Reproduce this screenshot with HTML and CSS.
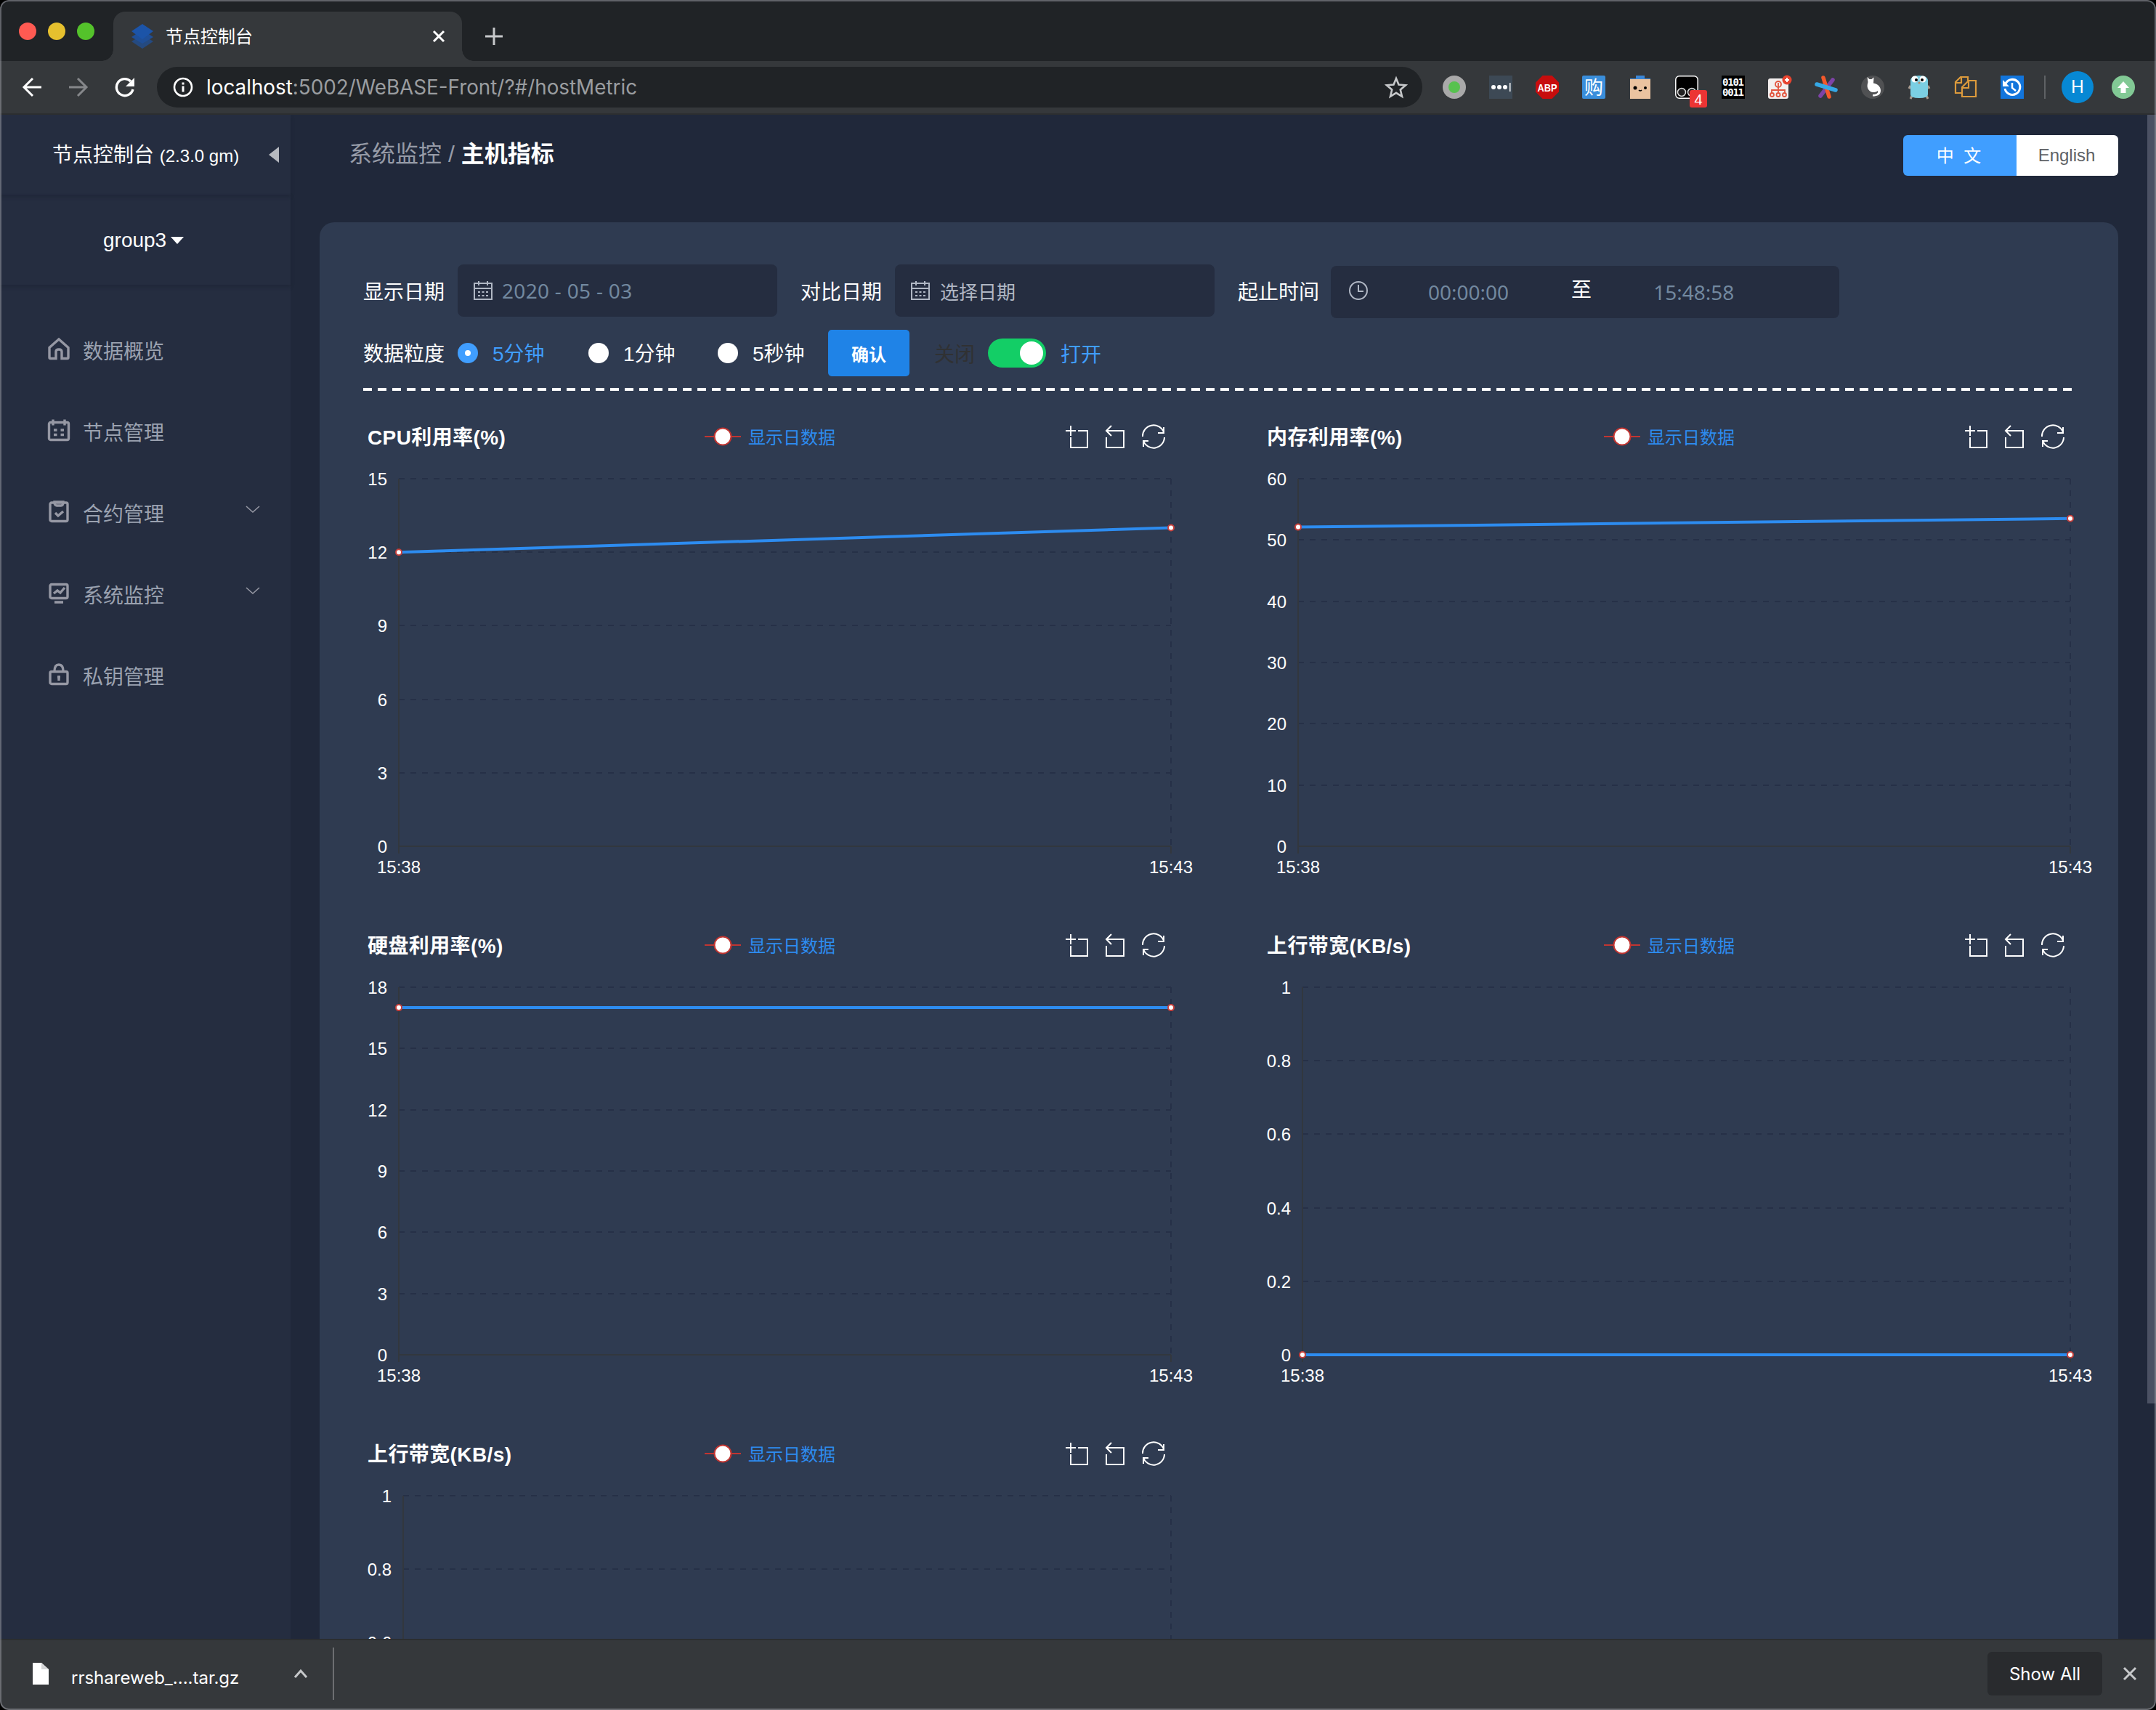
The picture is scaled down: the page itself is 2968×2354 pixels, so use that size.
FILE: index.html
```html
<!DOCTYPE html>
<html lang="zh-CN">
<head>
  <meta charset="UTF-8">
  <title>节点控制台</title>
  <link rel="stylesheet" href="styles.css">
</head>
<body>
  <div class="window">
    <div class="tab-strip">
      <div class="lights">
        <span class="light red"></span>
        <span class="light yellow"></span>
        <span class="light green"></span>
      </div>
      <div class="tab">
        <svg class="favicon" width="32" height="34" viewBox="0 0 32 34">
          <path d="M16 15l15 9-15 10L1 24z" fill="#254a80"/>
          <path d="M16 8l15 10-15 9L1 18z" fill="#1f4f98"/>
          <path d="M16 0l15 10-15 11L1 10z" fill="#1c54a8"/>
        </svg>
        <span class="tab-title">节点控制台</span>
        <svg width="18" height="18" viewBox="0 0 18 18"><path d="M2 2l14 14M16 2L2 16" stroke="#fff" stroke-width="3"/></svg>
      </div>
      <svg class="new-tab" width="24" height="24" viewBox="0 0 24 24"><path d="M12 0v24M0 12h24" stroke="#c6c8ca" stroke-width="3"/></svg>
    </div>

    <div class="toolbar">
      <div class="nav-buttons">
        <svg width="28" height="28" viewBox="0 0 28 28" fill="none" stroke="#fff" stroke-width="3"><path d="M27 14H3M15 2L3 14l12 12"/></svg>
        <svg width="28" height="28" viewBox="0 0 28 28" fill="none" stroke="#85878a" stroke-width="3"><path d="M1 14h24M13 2l12 12-12 12"/></svg>
        <svg width="28" height="28" viewBox="0 0 28 28" fill="none"><path d="M22 6a11.5 11.5 0 1 0 3 11" stroke="#fff" stroke-width="3.4"/><path d="M27 1v12H15z" fill="#fff"/></svg>
      </div>
      <div class="address">
        <svg width="28" height="28" viewBox="0 0 28 28"><circle cx="14" cy="14" r="12" fill="none" stroke="#fff" stroke-width="2.6"/><path d="M14 12.500v8M14 7.500v3" stroke="#fff" stroke-width="3"/></svg>
        <span class="url">localhost<span class="url-path">:5002/WeBASE-Front/?#/hostMetric</span></span>
        <svg width="32" height="32" viewBox="0 0 32 32"><path d="M16 4l3.500 8.500 9.500.8-7.200 6.200 2.200 9.300-8-5-8 5 2.200-9.300L3 13.300l9.500-.8z" fill="none" stroke="#c6c8ca" stroke-width="2.600"/></svg>
      </div>
      <div class="extensions">
        <svg width="32" height="32" viewBox="0 0 32 32"><circle cx="16" cy="16" r="16" fill="#a9a9a9"/><circle cx="16" cy="16" r="8" fill="#57c24f"/></svg>
        <svg width="32" height="32" viewBox="0 0 32 32"><rect width="32" height="32" fill="#3d4955"/><g fill="#fff"><circle cx="6" cy="16" r="3"/><circle cx="14" cy="16" r="3"/><circle cx="22" cy="16" r="3"/><path d="M28 10h1.500v12H28z"/></g></svg>
        <svg width="32" height="32" viewBox="0 0 32 32"><path d="M9.500 0h13L32 9.500v13L22.500 32h-13L0 22.500v-13z" fill="#c70d0d"/><text x="16" y="21.500" class="ext-abp" textLength="27" lengthAdjust="spacingAndGlyphs">ABP</text></svg>
        <svg width="32" height="32" viewBox="0 0 32 32"><rect width="32" height="32" rx="2" fill="#3a8edb"/><text x="16" y="26" class="ext-buy">购</text></svg>
        <svg width="32" height="32" viewBox="0 0 32 32"><rect x="2" y="5" width="28" height="27" fill="#eac3a0"/><path d="M2 5h28v-1H22V0H10v4H2z" fill="#3b86d6"/><circle cx="9" cy="17" r="2.500"/><circle cx="23" cy="17" r="2"/><path d="M14 20q2 2 4 0" fill="none" stroke="#000" stroke-width="1.500"/></svg>
        <svg width="32" height="32" viewBox="0 0 32 32"><rect x=".8" y=".8" width="30.400" height="30.400" rx="5" fill="#000" stroke="#fff" stroke-width="1.500"/><g fill="#222" stroke="#ddd" stroke-width="1.500"><circle cx="9" cy="23" r="5.500"/><circle cx="23" cy="23" r="5.500"/></g><rect x="20" y="20" width="24" height="24" rx="3" fill="#ec3434"/><text x="32" y="40" class="ext-badge">4</text></svg>
        <svg width="32" height="32" viewBox="0 0 32 32"><rect width="32" height="32" fill="#000"/><text x="16" y="14" class="ext-bits" textLength="30">0101</text><text x="16" y="28" class="ext-bits" textLength="30">0011</text></svg>
        <svg width="32" height="32" viewBox="0 0 32 32"><rect x="0" y="4" width="28" height="28" rx="3" fill="#f3efee"/><g fill="none" stroke="#e2553e" stroke-width="1.800"><circle cx="14" cy="12" r="4"/><path d="M14 10v13M5 24v-4h18v4"/><circle cx="5.500" cy="26.500" r="2.500"/><circle cx="14" cy="26.500" r="2.500"/><circle cx="22.500" cy="26.500" r="2.500"/></g><circle cx="26" cy="6" r="6.500" fill="#e8442f"/><path d="M26 3v6M23 6h6" stroke="#fff" stroke-width="2"/></svg>
        <svg width="32" height="32" viewBox="0 0 32 32" stroke-width="5.500" stroke-linecap="round"><path d="M25 6L8 28" stroke="#7d43a6"/><path d="M12 3l8 26" stroke="#f4592b"/><path d="M3 12l26 8" stroke="#35a8e6"/></svg>
        <svg width="32" height="32" viewBox="0 0 32 32"><circle cx="16" cy="16" r="16" fill="#505153"/><path d="M8.500 2l3 3h3l3-2.500-.5 8c6 1 10 5 10 10 0 6-4 8-11 8v-2.500c5 0 8-1.500 7-5-5 4-12 2-14-4-1-3 0-6 .5-8z" fill="#fff"/></svg>
        <svg width="32" height="32" viewBox="0 0 32 32"><path d="M4 14l-2 4M28 14l2 4M6 28l-2 4M26 28l2 4" stroke="#a99c90" stroke-width="3"/><path d="M4 6q1-6 12-6t12 6v20q0 5-12 5T4 26z" fill="#7bcfe3"/><circle cx="10" cy="5" r="4.500" fill="#fff"/><circle cx="21" cy="5" r="4.500" fill="#fff"/><circle cx="12" cy="6" r="2"/><circle cx="20" cy="6" r="2"/><circle cx="16" cy="10" r="1.500" fill="#b98a6a"/></svg>
        <svg width="32" height="32" viewBox="0 0 32 32" fill="none" stroke="#dc9a3c" stroke-width="2.200"><path d="M11 24H2V9l7-7h10v5M2 10h8V2"/><path d="M11 16l9-9h10v22H11zM11 17h9V7"/></svg>
        <svg width="32" height="32" viewBox="0 0 32 32"><rect width="32" height="32" fill="#1275dc"/><path d="M7 11a10.500 10.500 0 1 1-1 7" fill="none" stroke="#fff" stroke-width="3"/><path d="M3 6v9h9z" fill="#fff"/><path d="M16 10v7l5 4" fill="none" stroke="#fff" stroke-width="2.500"/></svg>
        <span class="ext-divider"></span>
        <span class="avatar">H</span>
        <svg class="update" width="32" height="32" viewBox="0 0 32 32"><circle cx="16" cy="16" r="16" fill="#82c995"/><path d="M16 8l8 9h-4.500v7h-7v-7H8z" fill="#fff"/></svg>
      </div>
    </div>

    <div class="page">
      <aside class="sidebar">
        <div class="brand">
          <span class="brand-name">节点控制台 <small>(2.3.0 gm)</small></span>
          <span class="collapse"></span>
        </div>
        <div class="group">group3<span class="caret"></span></div>
        <ul class="menu">
          <li>
            <svg width="32" height="32" viewBox="0 0 32 32"><path d="M3 14.500L16 3l13 11.500V28q0 1.500-1.500 1.500H20V20q0-3-4-3t-4 3v9.500H4.500Q3 29.500 3 28z"/></svg>
            <span>数据概览</span>
          </li>
          <li>
            <svg width="32" height="32" viewBox="0 0 32 32"><rect x="2.500" y="5.500" width="27" height="24" rx="2"/><path d="M8 1.500v8M24 1.500v8M9 16h4.500M18.500 16H23M9 22.500h4.500M18.500 22.500H23"/></svg>
            <span>节点管理</span>
          </li>
          <li>
            <svg width="32" height="32" viewBox="0 0 32 32"><rect x="4" y="4" width="24" height="25.500" rx="2"/><path d="M10 3q0 5 3 5h6q3 0 3-5zM11 18l4 4 7-6"/></svg>
            <span>合约管理</span>
            <svg class="arrow" width="20" height="12" viewBox="0 0 20 12"><path d="M1 1l9 8 9-8"/></svg>
          </li>
          <li>
            <svg width="32" height="32" viewBox="0 0 32 32"><rect x="4" y="4.500" width="24" height="19" rx="2"/><path d="M9 17l5-4 4 3 6-7M10 29h12"/></svg>
            <span>系统监控</span>
            <svg class="arrow" width="20" height="12" viewBox="0 0 20 12"><path d="M1 1l9 8 9-8"/></svg>
          </li>
          <li>
            <svg width="32" height="32" viewBox="0 0 32 32"><rect x="4" y="12.500" width="24" height="17" rx="2"/><path d="M10 12q0-9 6-9t6 9M16 18v7M14 20h4"/></svg>
            <span>私钥管理</span>
          </li>
        </ul>
      </aside>

      <main class="content">
        <div class="content-head">
          <div class="breadcrumb">系统监控 / <b>主机指标</b></div>
          <div class="lang">
            <button class="lang-btn active">中&nbsp; 文</button>
            <button class="lang-btn">English</button>
          </div>
        </div>

        <section class="panel">
          <div class="filters">
            <label>显示日期</label>
            <div class="field">
              <svg width="28" height="28" viewBox="0 0 28 28"><path d="M2 4h24v22H2zM2 11h24M8 1v6M20 1v6M7 16h3M12.500 16h3M18 16h3M7 21h3M12.500 21h3M18 21h3"/></svg>
              <span class="value date">2020 - 05 - 03</span>
            </div>
            <label>对比日期</label>
            <div class="field">
              <svg width="28" height="28" viewBox="0 0 28 28"><path d="M2 4h24v22H2zM2 11h24M8 1v6M20 1v6M7 16h3M12.500 16h3M18 16h3M7 21h3M12.500 21h3M18 21h3"/></svg>
              <span class="placeholder">选择日期</span>
            </div>
            <label>起止时间</label>
            <div class="field range">
              <svg width="28" height="28" viewBox="0 0 28 28"><circle cx="14" cy="14" r="12"/><path d="M14 6v9h7"/></svg>
              <span class="value from">00:00:00</span>
              <span class="to">至</span>
              <span class="value">15:48:58</span>
            </div>
          </div>
          <div class="options">
            <label>数据粒度</label>
            <span class="radio checked"></span><span class="radio-label on">5分钟</span>
            <span class="radio"></span><span class="radio-label">1分钟</span>
            <span class="radio"></span><span class="radio-label">5秒钟</span>
            <button class="confirm">确认</button>
            <span class="off-label">关闭</span>
            <span class="switch"></span>
            <span class="on-label">打开</span>
          </div>
          <div class="rule"></div>
          <div class="charts" id="charts"></div>
        </section>
      </main>
      <div class="scrollbar"></div>
    </div>

    <div class="downloads">
      <svg class="file" width="22" height="30" viewBox="0 0 22 30"><path d="M0 0h12l10 9v21H0z" fill="#fff"/><path d="M12 0v9h10z" fill="#d5d6d8"/></svg>
      <span class="file-name">rrshareweb_....tar.gz</span>
      <svg width="20" height="14" viewBox="0 0 20 14"><path d="M2 12l8-9 8 9" fill="none" stroke="#c6c8ca" stroke-width="3"/></svg>
      <span class="dl-divider"></span>
      <button class="show-all">Show All</button>
      <svg width="20" height="20" viewBox="0 0 20 20"><path d="M2 2l16 16M18 2L2 18" stroke="#c6c8ca" stroke-width="3"/></svg>
    </div>
  </div>
  <script src="charts.js"></script>
</body>
</html>
```
FILE: styles.css
```css
* {
  margin: 0;
  padding: 0;
  box-sizing: border-box;
}

body {
  background: #000;
  color: #fff;
  font-family: "Liberation Sans", "Noto Sans CJK SC", sans-serif;
  font-size: 28px;
  overflow: hidden;
}

button {
  border: none;
  font-family: inherit;
  font-size: 24px;
}

svg {
  display: block;
  flex-shrink: 0;
}

.window {
  position: relative;
  display: flex;
  flex-direction: column;
  width: 2968px;
  height: 2354px;
  border-radius: 12px;
  overflow: hidden;
}

/* light hairline around the window */
.window::after {
  content: "";
  position: absolute;
  inset: 0;
  border: 2px solid rgba(150, 152, 158, 0.55);
  border-radius: 12px;
}

/* Browser tabs */
.tab-strip {
  display: flex;
  align-items: flex-end;
  height: 84px;
  background: #202326;
}

.lights {
  display: flex;
  gap: 16px;
  width: 156px;
  padding-left: 26px;
  margin-bottom: 29px;
}

.light {
  width: 24px;
  height: 24px;
  border-radius: 50%;
}

.red { background: #ff5a52; }
.yellow { background: #e6c02e; }
.green { background: #54c22b; }

.tab {
  position: relative;
  display: flex;
  align-items: center;
  width: 480px;
  height: 68px;
  padding: 0 23px 0 24px;
  background: #35383b;
  border-radius: 16px 16px 0 0;
}

.tab::before,
.tab::after {
  content: "";
  position: absolute;
  bottom: 0;
  width: 16px;
  height: 16px;
}

.tab::before {
  left: -16px;
  background: radial-gradient(circle at 0 0, transparent 15.5px, #35383b 16px);
}

.tab::after {
  right: -16px;
  background: radial-gradient(circle at 100% 0, transparent 15.5px, #35383b 16px);
}

.tab-title {
  flex: 1;
  margin: 0 0 4px 16px;
  font-size: 24px;
}

.new-tab {
  margin: 0 0 22px 32px;
}

/* Browser toolbar */
.toolbar {
  display: flex;
  align-items: center;
  height: 74px;
  padding-left: 30px;
  background: #35383b;
  border-bottom: 2px solid #2c2e30;
}

.nav-buttons {
  display: flex;
  gap: 36px;
  width: 186px;
}

.address {
  display: flex;
  align-items: center;
  width: 1742px;
  height: 56px;
  padding: 0 20px 0 22px;
  background: #202326;
  border-radius: 28px;
}

.url {
  flex: 1;
  margin-left: 18px;
  font-family: Inter, sans-serif;
  font-size: 27.8px;
}

.url-path {
  color: #9a9da0;
}

.extensions {
  display: flex;
  align-items: center;
  gap: 32px;
  margin-left: 28px;
}

.extensions svg {
  overflow: visible;
}

.extensions text {
  fill: #fff;
  text-anchor: middle;
}

.ext-abp {
  font: bold 15px "Liberation Sans", sans-serif;
}

.ext-buy {
  font: 26px "Noto Sans CJK SC", sans-serif;
}

.ext-bits {
  font: bold 14px "DejaVu Sans Mono", monospace;
}

.ext-badge {
  font: 20px "Liberation Sans", sans-serif;
}

.ext-divider {
  width: 2px;
  height: 32px;
  margin-left: -4px;
  background: #5f6265;
}

.avatar {
  width: 44px;
  height: 44px;
  margin-left: -10px;
  border-radius: 50%;
  background: #0788d4;
  font: 24px/44px Inter, sans-serif;
  text-align: center;
}

.update {
  margin-left: -7px;
}

/* Page */
.page {
  display: flex;
  height: 2098px;
  background: #20283a;
  overflow: hidden;
}

.sidebar {
  width: 400px;
  background: #252d40;
}

.brand {
  display: flex;
  align-items: center;
  justify-content: space-between;
  height: 110px;
  padding: 0 16px 0 72px;
  box-shadow: 0 3px 5px rgba(20, 26, 40, 0.3);
}

.brand-name {
  margin-bottom: 4px;
}

.brand-name small {
  font-size: 24px;
}

.collapse {
  border: 11px solid transparent;
  border-left: none;
  border-right: 14px solid #b6b9c0;
}

.group {
  display: flex;
  align-items: center;
  height: 124px;
  padding: 2px 0 0 142px;
  box-shadow: 0 3px 5px rgba(20, 26, 40, 0.3);
}

.caret {
  margin-left: 6px;
  border: 9px solid transparent;
  border-top: 10px solid #fff;
  border-bottom: none;
}

.menu {
  padding-top: 34px;
  list-style: none;
}

.menu li {
  display: flex;
  align-items: center;
  height: 112px;
  padding: 0 42px 0 65px;
  color: #9ba2b0;
}

.menu svg {
  margin-bottom: 4px;
  fill: none;
  stroke: #9698a4;
  stroke-width: 3.4;
}

.menu span {
  flex: 1;
  margin-left: 17px;
}

.menu .arrow {
  margin-bottom: 9px;
  stroke-width: 1.6;
}

.content {
  display: flex;
  flex-direction: column;
  width: 2516px;
  height: 2098px;
  padding-left: 40px;
}

.content-head {
  display: flex;
  align-items: flex-start;
  justify-content: space-between;
  height: 148px;
  padding: 28px 0 0 40px;
  flex-shrink: 0;
}

.breadcrumb {
  color: #969ba7;
  font-size: 32px;
  line-height: 52px;
}

.breadcrumb b {
  color: #fff;
}

.lang {
  display: flex;
  border-radius: 6px;
  overflow: hidden;
}

.lang-btn {
  width: 140px;
  height: 56px;
  padding-right: 2px;
  background: #fff;
  color: #606266;
}

.lang-btn.active {
  width: 156px;
  padding: 0 3px 3px 0;
  background: #409eff;
  color: #fff;
}

.panel {
  height: 1950px;
  padding: 58px 0 0 60px;
  background: #2f3b51;
  border-radius: 20px 20px 0 0;
  overflow: hidden;
  flex-shrink: 0;
}

/* Filters */
.filters {
  display: flex;
  align-items: center;
  height: 72px;
}

.filters label {
  width: 130px;
}

.field {
  display: flex;
  align-items: center;
  width: 440px;
  height: 72px;
  margin-right: 32px;
  padding-left: 21px;
  background: #252d40;
  border-radius: 8px;
}

.field svg {
  fill: none;
  stroke: #b0b7c4;
  stroke-width: 2;
}

.field .value {
  margin-left: 12px;
  color: #72889f;
  font-family: "Noto Sans", sans-serif;
}

.field .date {
  letter-spacing: 0.3px;
}

.field .placeholder {
  margin-left: 13px;
  color: #b0b7c4;
  font-size: 26px;
}

.field.range {
  width: 700px;
  margin: 4px 0 0 -2px;
  padding-left: 24px;
}

.range svg {
  margin-bottom: 4px;
}

.field .from {
  margin-left: 82px;
}

.to {
  margin: 0 73px 10px 86px;
}

.options {
  display: flex;
  align-items: center;
  height: 98px;
  padding-top: 2px;
}

.options label {
  width: 130px;
  margin-bottom: 2px;
}

.rule {
  width: 2356px;
  height: 4px;
  background: repeating-linear-gradient(90deg, #fff 0 12px, transparent 12px 20px);
}

.radio {
  width: 28px;
  height: 28px;
  border-radius: 50%;
  background: #fff;
}

.radio.checked {
  border: 10px solid #409eff;
}

.radio-label {
  width: 150px;
  padding-left: 20px;
  margin-bottom: 2px;
}

.radio-label.on {
  width: 152px;
}

.on,
.on-label {
  color: #409eff;
}

.confirm {
  width: 112px;
  height: 64px;
  margin-left: -26px;
  background: #1f83e7;
  border-radius: 5px;
  color: #fff;
  font-weight: bold;
}

.off-label {
  margin-left: 34px;
  color: #303133;
}

.switch {
  display: flex;
  justify-content: flex-end;
  width: 80px;
  height: 40px;
  margin: 0 20px 0 18px;
  padding: 4px;
  border-radius: 20px;
  background: #13ce66;
}

.switch::after {
  content: "";
  width: 32px;
  height: 32px;
  border-radius: 50%;
  background: #fff;
}

/* Charts */
.charts {
  display: grid;
  grid-template-columns: repeat(2, 1178px);
  gap: 0 60px;
  padding-top: 27px;
}

.chart {
  height: 700px;
}

.chart-head {
  display: grid;
  grid-template-columns: 464px 496px auto;
  align-items: center;
  height: 75px;
  padding: 0 0 4px 6px;
}

.chart-title {
  margin-bottom: 1px;
  font-weight: bold;
  letter-spacing: 0.4px;
}

.legend {
  display: flex;
  align-items: center;
  gap: 10px;
  color: #2d8cf0;
  font-size: 24px;
}

.tools {
  fill: none;
  stroke: #fff;
  stroke-width: 2;
}

.plot {
  overflow: visible;
}

.plot text {
  fill: #fff;
  font-size: 24px;
}

.split {
  stroke: #263047;
  stroke-width: 2;
  stroke-dasharray: 8 8;
}

.axis {
  stroke: #32373e;
  stroke-width: 2;
}

.series {
  stroke: #2d8cf0;
  stroke-width: 4;
}

.point {
  fill: #fff;
  stroke: #c8403c;
  stroke-width: 2;
}

.scrollbar {
  width: 12px;
  height: 1774px;
  margin-left: auto;
  background: #4b5163;
}

/* Download shelf */
.downloads {
  display: flex;
  align-items: center;
  height: 98px;
  padding: 0 26px 4px 45px;
  background: #35383b;
  border-top: 2px solid #2c2e30;
}

.file-name {
  width: 286px;
  margin: 10px 0 0 31px;
  font-family: Inter, sans-serif;
  font-size: 24px;
  flex-shrink: 0;
}

.file-name + svg {
  margin-left: 20px;
}

.dl-divider {
  width: 2px;
  height: 72px;
  margin-left: 34px;
  background: #6c6e71;
}

.show-all {
  width: 158px;
  height: 60px;
  margin: 0 28px 0 auto;
  border-radius: 6px;
  background: #292b2e;
  color: #fff;
  font-family: Inter, sans-serif;
  font-size: 24px;
}
```
FILE: charts.js
```js
const charts = [
  { title: 'CPU利用率(%)', left: 49, ticks: [0, 3, 6, 9, 12, 15], data: [12, 13] },
  { title: '内存利用率(%)', left: 49, ticks: [0, 10, 20, 30, 40, 50, 60], data: [52.1, 53.5] },
  { title: '硬盘利用率(%)', left: 49, ticks: [0, 3, 6, 9, 12, 15, 18], data: [17, 17] },
  { title: '上行带宽(KB/s)', left: 55, ticks: [0, 0.2, 0.4, 0.6, 0.8, 1], data: [0, 0] },
  { title: '上行带宽(KB/s)', left: 55, ticks: [0, 0.2, 0.4, 0.6, 0.8, 1], data: [0, 0] }
];
const times = ['15:38', '15:43'];
const plotRight = 1112;
const plotTop = 19;
const plotBottom = 525;

function drawPlot(chart) {
  const max = chart.ticks[chart.ticks.length - 1];
  const y = v => plotBottom - v / max * (plotBottom - plotTop);
  let out = '';
  chart.ticks.forEach(t => {
    const cls = t === 0 ? 'axis' : 'split';
    out += `<path class="${cls}" d="M${chart.left} ${Math.round(y(t))}H${plotRight}"/>`;
    out += `<text x="${chart.left - 16}" y="${y(t) + 9}" text-anchor="end">${t}</text>`;
  });
  out += `<path class="axis" d="M${chart.left} ${plotTop}V${plotBottom + 10}M${plotRight} ${plotBottom}v10"/>`;
  out += `<path class="split" d="M${plotRight} ${plotTop}V${plotBottom}"/>`;
  out += `<path class="series" d="M${chart.left} ${y(chart.data[0])}L${plotRight} ${y(chart.data[1])}"/>`;
  [chart.left, plotRight].forEach((x, i) => {
    out += `<circle class="point" cx="${x}" cy="${y(chart.data[i])}" r="4"/>`;
    out += `<text x="${x}" y="562" text-anchor="middle">${times[i]}</text>`;
  });
  return out;
}

document.getElementById('charts').innerHTML = charts.map(chart => `
  <div class="chart">
    <div class="chart-head">
      <span class="chart-title">${chart.title}</span>
      <span class="legend">
        <svg width="50" height="28" viewBox="0 0 50 28">
          <path d="M0 14h50" stroke="#c23531" stroke-width="2"/>
          <circle cx="25" cy="14" r="11.5" fill="#fff" stroke="#c23531" stroke-width="2"/>
        </svg>
        显示日数据
      </span>
      <svg class="tools" width="140" height="34" viewBox="0 0 140 34">
        <path d="M1 9h14M8 2v14M18 9h13v23H8V18"/>
        <path d="M64 2l-7 7 7 7M57 9h24v23H57V18"/>
        <path d="M107 17a15 15 0 0 1 29-6M136 4v8h-8M137 18a15 15 0 0 1-29 5M108 31v-8h7"/>
      </svg>
    </div>
    <svg class="plot" width="1178" height="625" viewBox="0 0 1178 625">${drawPlot(chart)}</svg>
  </div>`).join('');
```
